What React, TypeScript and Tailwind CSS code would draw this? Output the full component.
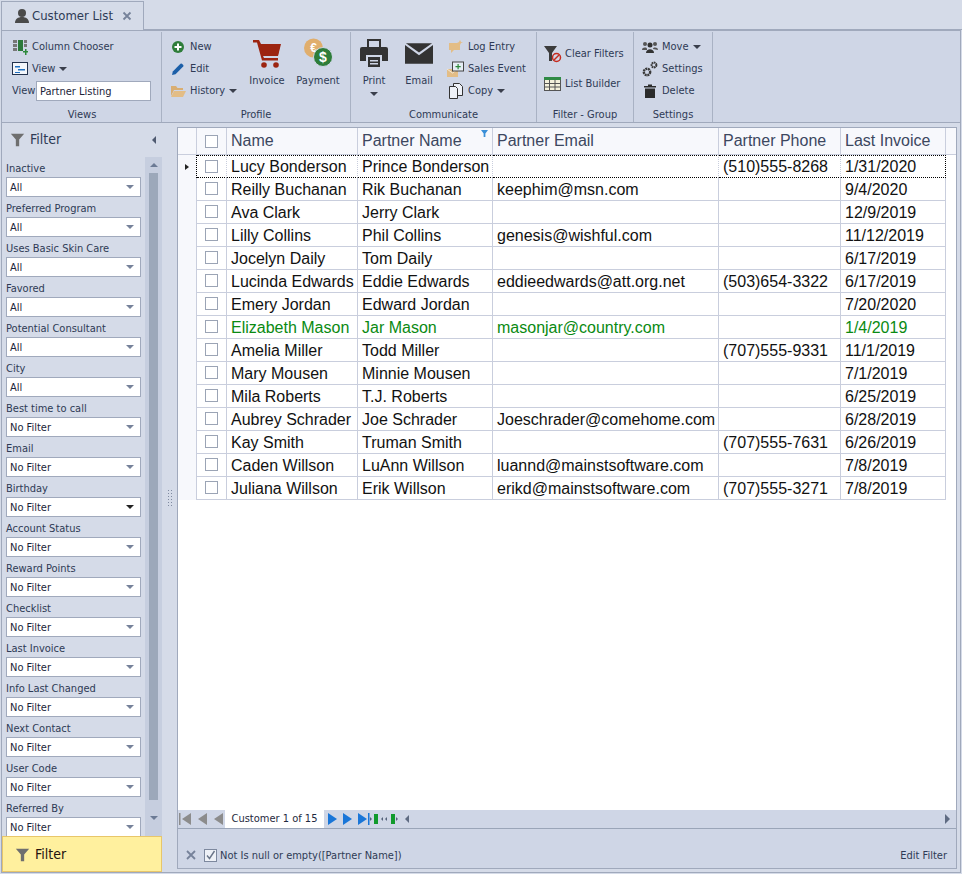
const uiFont = "font-['DejaVu_Sans_Condensed','DejaVu_Sans',sans-serif] [font-stretch:condensed]";

const filters = [
  { label: "Inactive", value: "All" },
  { label: "Preferred Program", value: "All" },
  { label: "Uses Basic Skin Care", value: "All" },
  { label: "Favored", value: "All" },
  { label: "Potential Consultant", value: "All" },
  { label: "City", value: "All" },
  { label: "Best time to call", value: "No Filter" },
  { label: "Email", value: "No Filter" },
  { label: "Birthday", value: "No Filter", dark: true },
  { label: "Account Status", value: "No Filter" },
  { label: "Reward Points", value: "No Filter" },
  { label: "Checklist", value: "No Filter" },
  { label: "Last Invoice", value: "No Filter" },
  { label: "Info Last Changed", value: "No Filter" },
  { label: "Next Contact", value: "No Filter" },
  { label: "User Code", value: "No Filter" },
  { label: "Referred By", value: "No Filter" },
];

const customers = [
  ["Lucy Bonderson", "Prince Bonderson", "", "(510)555-8268", "1/31/2020"],
  ["Reilly Buchanan", "Rik Buchanan", "keephim@msn.com", "", "9/4/2020"],
  ["Ava Clark", "Jerry Clark", "", "", "12/9/2019"],
  ["Lilly Collins", "Phil Collins", "genesis@wishful.com", "", "11/12/2019"],
  ["Jocelyn Daily", "Tom Daily", "", "", "6/17/2019"],
  ["Lucinda Edwards", "Eddie Edwards", "eddieedwards@att.org.net", "(503)654-3322", "6/17/2019"],
  ["Emery Jordan", "Edward Jordan", "", "", "7/20/2020"],
  ["Elizabeth Mason", "Jar Mason", "masonjar@country.com", "", "1/4/2019"],
  ["Amelia Miller", "Todd Miller", "", "(707)555-9331", "11/1/2019"],
  ["Mary Mousen", "Minnie Mousen", "", "", "7/1/2019"],
  ["Mila Roberts", "T.J. Roberts", "", "", "6/25/2019"],
  ["Aubrey Schrader", "Joe Schrader", "Joeschrader@comehome.com", "", "6/28/2019"],
  ["Kay Smith", "Truman Smith", "", "(707)555-7631", "6/26/2019"],
  ["Caden Willson", "LuAnn Willson", "luannd@mainstsoftware.com", "", "7/8/2019"],
  ["Juliana Willson", "Erik Willson", "erikd@mainstsoftware.com", "(707)555-3271", "7/8/2019"],
];

const Caret = () => <span className="ml-1 inline-block border-x-[4px] border-t-[4px] border-x-transparent border-t-[#3a3f4c]" />;

function FunnelIcon({ size = 18, color = "#6f6f6f" }: { size?: number; color?: string }) {
  return (
    <svg width={size} height={size} viewBox="0 0 18 18">
      <path d="M1 2h16l-6 7v8H7V9z" fill={color} />
    </svg>
  );
}

function RibbonGroup({ title, width, children }: { title: string; width: string; children: React.ReactNode }) {
  return (
    <div className={`${width} flex flex-col border-r border-[#a9b2c4] h-[90px] mt-px shrink-0`}>
      <div className="flex-1 flex min-h-0">{children}</div>
      <div className="h-[17px] text-center text-[11px] leading-[19px] text-[#2e3a55]">{title}</div>
    </div>
  );
}

function SmallButton({ icon, label, caret }: { icon: React.ReactNode; label: string; caret?: boolean }) {
  return (
    <div className="h-[22px] flex items-center text-[11px] text-[#2e3a55] whitespace-nowrap">
      <span className="w-[20px] h-[18px] flex items-center justify-center mr-[2px]">{icon}</span>
      {label}
      {caret && <Caret />}
    </div>
  );
}

function LargeButton({ icon, label, width, caret }: { icon: React.ReactNode; label: string; width: string; caret?: boolean }) {
  return (
    <div className={`${width} flex flex-col items-center text-[11px] text-[#2e3a55] pt-[5px]`}>
      <span className="h-[32px] flex items-center justify-center">{icon}</span>
      <span className="mt-[4px] leading-[15px]">{label}</span>
      {caret && <span className="mt-[4px] border-x-[4px] border-t-[4px] border-x-transparent border-t-[#3a3f4c]" />}
    </div>
  );
}

function Ribbon() {
  return (
    <div className="h-[93px] mx-[1px] border border-[#a0a9bc] bg-[#cfd6e6] flex pl-[1px]">
      <RibbonGroup title="Views" width="w-[159px]">
        <div className="pl-[7px] pt-[4px] flex flex-col">
          <SmallButton
            label="Column Chooser"
            icon={
              <svg width="16" height="16" viewBox="0 0 16 16">
                <rect x="1" y="1" width="4" height="3" fill="#777" /><rect x="1" y="5" width="4" height="3" fill="#777" /><rect x="1" y="9" width="4" height="3" fill="#777" />
                <rect x="6" y="1" width="5" height="11" fill="#2c7a3a" />
                <rect x="12" y="1" width="3" height="3" fill="#777" /><rect x="12" y="5" width="3" height="3" fill="#777" />
                <path d="M11 12h2v-2h1.500v2H16v1.500h-1.500V16H13v-2.500h-2z" fill="#2c8a3a" />
              </svg>
            }
          />
          <SmallButton
            label="View"
            caret
            icon={
              <svg width="16" height="14" viewBox="0 0 16 14">
                <rect x="0.500" y="0.500" width="15" height="12" fill="#f3f6fb" stroke="#23324d" />
                <path d="M3 4h5v1.500H3zM6 7h7v1.500H6zM3 10h5v1H3z" fill="#1f6fc0" />
              </svg>
            }
          />
          <div className="flex items-center h-[22px] text-[11px] text-[#2e3a55]">
            <span className="w-[26px] pl-[2px] pt-[1px]">View</span>
            <div className="w-[115px] h-[20px] bg-white border border-[#a0a9bc] pl-[3px] leading-[19px] text-[#1b2438]">Partner Listing</div>
          </div>
        </div>
      </RibbonGroup>
      <RibbonGroup title="Profile" width="w-[189px]">
        <div className="pl-[6px] pt-[4px] w-[80px]">
          <SmallButton
            label="New"
            icon={
              <svg width="14" height="14" viewBox="0 0 14 14">
                <circle cx="7" cy="7" r="6" fill="#2e7d3a" />
                <path d="M6 3.500h2V6h2.500v2H8v2.500H6V8H3.500V6H6z" fill="#fff" />
              </svg>
            }
          />
          <SmallButton
            label="Edit"
            icon={
              <svg width="14" height="14" viewBox="0 0 14 14">
                <path d="M1 13l.8-3.500L9.500 1.800a1 1 0 0 1 1.400 0l1.300 1.300a1 1 0 0 1 0 1.400L4.500 12.200z" fill="#1c5fa8" />
              </svg>
            }
          />
          <SmallButton
            label="History"
            caret
            icon={
              <svg width="16" height="13" viewBox="0 0 16 13">
                <path d="M1 1h5l1.500 2H13v2H4L1 11z" fill="#d9ae72" />
                <path d="M4 6h12l-3 6H1z" fill="#e3bd86" />
              </svg>
            }
          />
        </div>
        <LargeButton
          label="Invoice"
          width="w-[50px]"
          icon={
            <svg width="30" height="30" viewBox="0 0 30 30">
              <path d="M1 2h6l2 4h20l-3 12H11l1 2h14v2.500H10L5 4.500H1z" fill="#9c2410" />
              <path d="M9 7h19l-2 10H11z" fill="#9c2410" />
              <circle cx="12" cy="27" r="2.800" fill="#9c2410" />
              <circle cx="24" cy="27" r="2.800" fill="#9c2410" />
            </svg>
          }
        />
        <LargeButton
          label="Payment"
          width="w-[52px]"
          icon={
            <svg width="30" height="30" viewBox="0 0 30 30">
              <circle cx="10.500" cy="10" r="9.500" fill="#e0ae6d" />
              <text x="10.500" y="14" textAnchor="middle" fontSize="12" fontWeight="700" fill="#fff" fontFamily="'Liberation Sans',sans-serif">€</text>
              <circle cx="20" cy="19" r="9.500" fill="#2e7d3a" stroke="#cfd6e6" />
              <text x="20" y="24" textAnchor="middle" fontSize="14" fontWeight="700" fill="#fff" fontFamily="'Liberation Sans',sans-serif">$</text>
            </svg>
          }
        />
      </RibbonGroup>
      <RibbonGroup title="Communicate" width="w-[186px]">
        <LargeButton
          label="Print"
          width="w-[46px]"
          caret
          icon={
            <svg width="30" height="30" viewBox="0 0 30 30">
              <path d="M8 1h14v8h-2V3H10v6H8z" fill="#333" />
              <path d="M3 9h24a2 2 0 0 1 2 2v12h-6v-6H7v6H1V11a2 2 0 0 1 2-2z" fill="#333" />
              <path d="M9 19h12v10H9z" fill="#333" />
              <path d="M11 22h8v1.500h-8zM11 25h8v1.500h-8z" fill="#cfd6e6" />
            </svg>
          }
        />
        <LargeButton
          label="Email"
          width="w-[44px]"
          icon={
            <svg width="28" height="21" viewBox="0 0 30 22">
              <path d="M1 0h28L15 10z" fill="#333" />
              <path d="M0 2l15 11L30 2v20H0z" fill="#333" />
            </svg>
          }
        />
        <div className="pt-[4px] ml-[5px]">
          <SmallButton
            label="Log Entry"
            icon={
              <svg width="16" height="14" viewBox="0 0 16 14">
                <path d="M1 3h11v7H6l-3 3v-3H1z" fill="#e3bd86" />
                <path d="M12 0l1 2 2 .5-2 .5-1 2-1-2-2-.5 2-.5z" fill="#e3bd86" />
              </svg>
            }
          />
          <SmallButton
            label="Sales Event"
            icon={
              <svg width="18" height="16" viewBox="0 0 18 16">
                <path d="M0 8h11v8H0z" fill="#e3bd86" />
                <path d="M0 8l5.500 4L11 8" fill="none" stroke="#f3ead9" />
                <rect x="5.500" y="1" width="11" height="9" fill="#e6edf5" stroke="#444" />
                <path d="M10.500 3h1.200v2h2v1.200h-2v2h-1.200v-2h-2V5h2z" fill="#2c8a3a" />
              </svg>
            }
          />
          <SmallButton
            label="Copy"
            caret
            icon={
              <svg width="14" height="16" viewBox="0 0 14 16">
                <path d="M4.500 .5h6l3 3v9h-9z" fill="#eef1f7" stroke="#333" />
                <path d="M.5 3.500h6l2 2v10h-8z" fill="#eef1f7" stroke="#333" />
              </svg>
            }
          />
        </div>
      </RibbonGroup>
      <RibbonGroup title="Filter - Group" width="w-[97px]">
        <div className="pl-[7px] pt-[11px] flex flex-col gap-[8px]">
          <div className="h-[22px] flex items-center text-[11px] text-[#2e3a55] whitespace-nowrap">
            <span className="mr-[3px] flex">
              <svg width="18" height="18" viewBox="0 0 18 18">
                <path d="M0 1h13L8 8v8H5V8z" fill="#3c3c3c" />
                <circle cx="12.500" cy="12.500" r="4" fill="none" stroke="#c62a1e" strokeWidth="1.500" />
                <path d="M10 15l5-5" stroke="#c62a1e" strokeWidth="1.500" />
              </svg>
            </span>
            Clear Filters
          </div>
          <div className="h-[22px] flex items-center text-[11px] text-[#2e3a55] whitespace-nowrap">
            <span className="mr-[4px] flex">
              <svg width="17" height="14" viewBox="0 0 17 14">
                <rect x="0.500" y="0.500" width="16" height="13" fill="#f4f1dc" stroke="#555" />
                <rect x="0" y="0" width="17" height="3" fill="#2f8a45" />
                <path d="M0 6.500h17M0 10h17M5.500 3v11M11 3v11" stroke="#555" />
              </svg>
            </span>
            List Builder
          </div>
        </div>
      </RibbonGroup>
      <RibbonGroup title="Settings" width="w-[79px]">
        <div className="pl-[6px] pt-[4px]">
          <SmallButton
            label="Move"
            caret
            icon={
              <svg width="16" height="12" viewBox="0 0 16 12">
                <circle cx="3" cy="3" r="2" fill="#555" /><circle cx="13" cy="3" r="2" fill="#555" /><circle cx="8" cy="4" r="2.500" fill="#333" />
                <path d="M0 9c0-3 5-3 5-1v1zM11 8c0-2 5-2 5 1z" fill="#555" />
                <path d="M4 12c0-5 8-5 8 0z" fill="#333" />
              </svg>
            }
          />
          <SmallButton
            label="Settings"
            icon={
              <svg width="16" height="16" viewBox="0 0 16 16">
                <circle cx="5" cy="11" r="3.200" fill="none" stroke="#3a3a3a" strokeWidth="2.400" strokeDasharray="2 .6" />
                <circle cx="12" cy="4" r="2.400" fill="none" stroke="#3a3a3a" strokeWidth="2" strokeDasharray="1.500 .5" />
              </svg>
            }
          />
          <SmallButton
            label="Delete"
            icon={
              <svg width="12" height="14" viewBox="0 0 12 14">
                <path d="M0 2h4V.5h4V2h4v1.500H0zM1 4.500h10V14H1z" fill="#2b2b2b" />
              </svg>
            }
          />
        </div>
      </RibbonGroup>
    </div>
  );
}

function FilterField({ label, value, dark }: { label: string; value: string; dark?: boolean }) {
  return (
    <div className="h-[40px] shrink-0 pl-[4px] pt-[3px]">
      <div className="h-[17px] text-[11px] leading-[17px] text-[#2e3a55] whitespace-nowrap">{label}</div>
      <div className="w-[135px] h-[20px] bg-white border border-[#a0a9bc] flex items-center justify-between pl-[3px] pr-[6px] text-[11px] leading-[19px] text-[#1b2438]">
        <span className="pt-[1px]">{value}</span>
        <span className={`border-x-[4px] border-t-[4px] border-x-transparent ${dark ? "border-t-[#222]" : "border-t-[#76829a]"}`} />
      </div>
    </div>
  );
}

function FilterPanel() {
  return (
    <div className="w-[160px] shrink-0 flex flex-col">
      <div className="h-[25px] shrink-0 flex items-center pl-[8px] pr-[5px] mt-[4px] text-[14px] text-[#2e3a55]">
        <FunnelIcon size={15} />
        <span className="ml-[5px]">Filter</span>
        <span className="ml-auto mr-[1px] border-y-[4px] border-r-[4px] border-y-transparent border-r-[#4f5a70]" />
      </div>
      <div className="flex-1 min-h-0 flex overflow-hidden">
        <div className="w-[143px] flex flex-col pt-[5px] overflow-hidden">
          {filters.map((f) => (
            <FilterField key={f.label} label={f.label} value={f.value} dark={f.dark} />
          ))}
        </div>
        <div className="w-[17px] shrink-0 bg-[#c6cedf] flex flex-col items-center mt-[5px]">
          <span className="h-[16px] shrink-0 flex items-center">
            <span className="border-x-[4px] border-b-[4px] border-x-transparent border-b-[#6c7b95]" />
          </span>
          <div className="w-[9px] h-[627px] shrink-0 bg-[#9ca8ba]" />
          <span className="flex-1 flex items-center">
            <span className="border-x-[4px] border-t-[4px] border-x-transparent border-t-[#6c7b95]" />
          </span>
        </div>
      </div>
      <div className="h-[36px] shrink-0 bg-[#fff09e] border border-[#e8c66a] flex items-center pl-[12px] text-[14px] text-[#23130f]">
        <FunnelIcon size={15} />
        <span className="ml-[5px]">Filter</span>
      </div>
    </div>
  );
}

function Splitter() {
  return (
    <div className="w-[15px] shrink-0 flex items-center justify-center">
      <div className="w-[6px] h-[18px] bg-[radial-gradient(#7f8aa0_0.8px,transparent_1px)] bg-[length:3px_3px]" />
    </div>
  );
}

function GridRow({ row, index }: { row: string[]; index: number }) {
  const focused = index === 0;
  const green = row[0] === "Elizabeth Mason";
  return (
    <div className="grid grid-cols-[19px_30px_131px_135px_226px_122px_105px] h-[23px]">
      <div className={`bg-[#f7f8fc] border-r flex items-center justify-center ${focused ? "border-dotted border-r-black" : "border-[#c9cedd]"}`}>
        {focused && <span className="border-y-[3px] border-l-[4px] border-y-transparent border-l-[#222]" />}
      </div>
      <div className={`border-r border-b border-r-[#c9cedd] flex items-center justify-center ${focused ? "border-t border-dotted border-t-black border-b-black" : "pb-[1px] border-b-[#c9cedd]"}`}>
        <span className="w-[13px] h-[13px] border border-[#9ba4b5] bg-white" />
      </div>
      {row.map((cell, i) => (
        <div
          key={i}
          className={`border-r border-b pl-[4px] text-[16px] whitespace-nowrap overflow-hidden ${focused ? "leading-[22px] border-t border-dotted border-t-black border-b-black" : "leading-[24px] border-b-[#c9cedd]"} ${focused && i === 4 ? "border-r-black" : "border-r-[#c9cedd]"} ${green ? "text-[#0a8a12]" : "text-[#111]"}`}
        >
          {cell}
        </div>
      ))}
    </div>
  );
}

function DataGrid() {
  const headers = ["Name", "Partner Name", "Partner Email", "Partner Phone", "Last Invoice"];
  return (
    <div className="flex-1 min-h-0 bg-white font-['Liberation_Sans',sans-serif]">
      <div className="grid grid-cols-[19px_30px_131px_135px_226px_122px_105px_1fr] h-[27px] bg-[#f7f8fc] border-b border-[#c9cedd]">
        <div className="border-r border-[#c9cedd]" />
        <div className="border-r border-[#c9cedd] flex items-center justify-center">
          <span className="w-[13px] h-[13px] border border-[#9ba4b5] bg-white" />
        </div>
        {headers.map((h) => (
          <div key={h} className="relative border-r border-[#c9cedd] pl-[4px] text-[16px] leading-[25px] text-[#3c475f] whitespace-nowrap">
            {h}
            {h === "Partner Name" && (
              <span className="absolute right-[4px] top-[2px]">
                <svg width="7" height="7" viewBox="0 0 8 8"><path d="M0 0h8L5 4v4H3V4z" fill="#3a8fd8" /></svg>
              </span>
            )}
          </div>
        ))}
        <div />
      </div>
      {customers.map((row, i) => (
        <GridRow key={row[0]} row={row} index={i} />
      ))}
    </div>
  );
}

const NavTri = ({ color, left, bar }: { color: string; left?: boolean; bar?: boolean }) => (
  <svg width="14" height="14" viewBox="0 0 14 14" className="shrink-0">
    {left ? <path d="M12 1v12L3 7z" fill={color} /> : <path d="M2 1v12l9-6z" fill={color} />}
    {bar && <rect x={left ? 0 : 12} y="1" width="1.500" height="12" fill={color} />}
  </svg>
);

function Navigator() {
  return (
    <div className="h-[18px] shrink-0 box-content bg-[#cfd6e6] border-b border-[#9aa5b8] flex items-center pl-[1px] pr-[6px]">
      <div className="flex gap-[2px]">
        <NavTri color="#8c8c8c" left bar />
        <NavTri color="#8c8c8c" left />
        <NavTri color="#8c8c8c" left />
      </div>
      <div className="w-[99px] h-full bg-white text-[11px] leading-[18px] text-[#1f2a40] text-center mr-[2px]">Customer 1 of 15</div>
      <div className="flex gap-[1px]">
        <NavTri color="#1a76d8" />
        <NavTri color="#1a76d8" />
        <NavTri color="#1a76d8" bar />
      </div>
      <svg width="32" height="10" viewBox="0 0 32 10" className="shrink-0">
        <path d="M0 3l2 2-2 2zM26 3l2 2-2 2zM13 3l-2 2 2 2zM17 3l-2 2 2 2z" fill="#55627a" />
        <rect x="4" y="0" width="4" height="10" fill="#119a2c" />
        <rect x="21" y="0" width="4" height="10" fill="#119a2c" />
      </svg>
      <span className="ml-[3px] border-y-[4px] border-r-[4px] border-y-transparent border-r-[#5f6b82]" />
      <span className="ml-auto border-y-[5px] border-l-[5px] border-y-transparent border-l-[#5f6b82]" />
    </div>
  );
}

function FilterBar() {
  return (
    <div className="h-[39px] shrink-0 flex items-end pb-[4px] pl-[6px] pr-[9px] text-[11px] text-[#2e3a55] bg-[#cfd6e6]">
      <svg width="14" height="14" viewBox="0 0 14 14" className="mb-[2px]">
        <path d="M3 3l8 8M11 3l-8 8" stroke="#76829a" strokeWidth="1.800" />
      </svg>
      <span className="ml-[6px] w-[13px] h-[13px] mb-[2px] border border-[#7d889e] bg-[#eef1f7] flex items-center justify-center">
        <svg width="11" height="11" viewBox="0 0 11 11"><path d="M2 5.500l2.500 3L9.500 1" fill="none" stroke="#6a7589" strokeWidth="1.400" /></svg>
      </span>
      <span className="ml-[3px]">Not Is null or empty([Partner Name])</span>
      <span className="ml-auto">Edit Filter</span>
    </div>
  );
}

export default function App() {
  return (
    <div className={`${uiFont} w-[962px] h-[874px] bg-[#d5dbe8] flex flex-col overflow-hidden`}>
      <div className="h-[30px] shrink-0 flex items-end">
        <div className="ml-[1px] w-[143px] h-[29px] bg-[#d5dbe8] border border-b-0 border-[#a0a9bc] flex items-center pl-[12px] pr-[11px] text-[13px] text-[#2e3a55]">
          <svg width="16" height="16" viewBox="0 0 16 16" className="mr-[2px] shrink-0">
            <circle cx="8" cy="5" r="4" fill="#4a4a4a" />
            <path d="M1 15c0-4 3-6 7-6s7 2 7 6z" fill="#4a4a4a" />
          </svg>
          Customer List
          <svg width="10" height="10" viewBox="0 0 10 10" className="ml-auto">
            <path d="M1.500 1.500l7 7M8.500 1.500l-7 7" stroke="#76829a" strokeWidth="1.800" />
          </svg>
        </div>
        <div className="flex-1 border-b border-[#a0a9bc]" />
      </div>
      <Ribbon />
      <div className="flex-1 min-h-0 mx-[1px] mb-[1px] border-x border-b border-[#a0a9bc] flex">
        <FilterPanel />
        <Splitter />
        <div className="w-[780px] shrink-0 mt-[4px] mb-[3px] border border-[#a0a9bc] flex flex-col">
          <DataGrid />
          <Navigator />
          <FilterBar />
        </div>
      </div>
    </div>
  );
}
